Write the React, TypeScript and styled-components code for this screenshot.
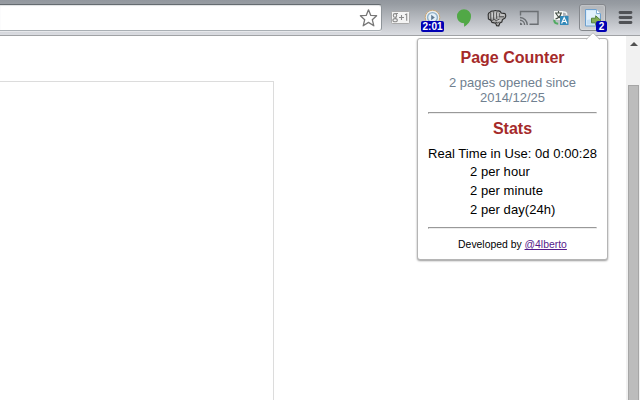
import React from 'react';
import styled, { createGlobalStyle } from 'styled-components';

const GlobalStyle = createGlobalStyle`
  * { box-sizing: border-box; }
  body { margin: 0; background: #fff; overflow: hidden; font-family: "Liberation Sans", Arial, sans-serif; }
`;

const Browser = styled.div`
  position: relative;
  display: flex;
  flex-direction: column;
  width: 640px;
  height: 400px;
  overflow: hidden;
  background: #fff;
`;

const Toolbar = styled.header`
  display: flex;
  flex: none;
  height: 36px;
  background: linear-gradient(#92979e 0, #979ca2 4px, #d9dbe0 34px);
  border-bottom: 1px solid #a0a2a5;
`;

const Omnibox = styled.div`
  display: flex;
  flex: none;
  justify-content: flex-end;
  align-items: center;
  width: 382px;
  height: 27px;
  margin-top: 4px;
  padding-right: 3px;
  background: #fff;
  border: 1px solid #8e9499;
  border-top-color: #656b70;
  border-bottom-color: #a9afb4;
  border-left: 0;
  border-radius: 0 3px 3px 0;
  box-shadow: inset 0 1px 1px #dfe1e3, 0 1px 0 rgba(255, 255, 255, 0.45);
`;

const Actions = styled.div`
  display: grid;
  grid-template-columns: repeat(8, 32px);
  margin-left: 2px;
  height: 35px;
`;

const Action = styled.div<{ $indent?: number }>`
  position: relative;
  display: flex;
  justify-content: center;
  align-items: center;
  padding-left: ${(p) => p.$indent ?? 0}px;
`;

const ActiveFrame = styled.div`
  display: flex;
  align-items: center;
  justify-content: center;
  width: 27px;
  height: 27px;
  margin-left: 1px;
  border: 1px solid #85888d;
  border-radius: 3px;
  background: linear-gradient(#b2b5b9, #d0d2d5);
  box-shadow: inset 0 0 2px rgba(255, 255, 255, 0.7);
`;

const Badge = styled.span<{ $left: number; $width: number }>`
  position: absolute;
  left: ${(p) => p.$left}px;
  top: 21px;
  width: ${(p) => p.$width}px;
  height: 11px;
  border-radius: 2px;
  background: #0000b4;
  color: #fff;
  font-size: 10px;
  font-weight: bold;
  line-height: 12px;
  text-align: center;
`;

const Content = styled.div`
  display: flex;
  flex: 1;
  min-height: 0;
`;

const Page = styled.main`
  flex: 1;
  padding-top: 45px;
`;

const PageBox = styled.section`
  width: 274px;
  height: 330px;
  border: 1px solid #dcdcdc;
  border-left: 0;
`;

const Scrollbar = styled.div`
  display: flex;
  flex-direction: column;
  width: 14px;
  padding: 6px 1px 0 2px;
  background: #f1f1f1;
`;

const ScrollArrow = styled.svg`
  display: block;
  margin-left: 2px;
`;

const ScrollThumb = styled.div`
  flex: 1;
  margin-top: 39px;
  background: #bcbcbc;
  border: 1px solid #a6a6a6;
  border-bottom: 0;
`;

const Popup = styled.aside`
  position: absolute;
  left: 417px;
  top: 38px;
  width: 191px;
  height: 222px;
  padding: 10px;
  background: #fff;
  border: 1px solid #b5b5b5;
  border-radius: 3px;
  box-shadow: 0 1px 2px rgba(0, 0, 0, 0.4);
  color: #000;
  font-size: 13px;
  text-align: center;
`;

const Pointer = styled.svg`
  position: absolute;
  left: 168px;
  top: -7px;
`;

const Heading = styled.h1`
  margin: 0;
  height: 18px;
  color: #a52a2a;
  font-size: 16px;
  font-weight: bold;
  line-height: 18px;
`;

const Summary = styled.p`
  margin: 8px 0 7px;
  color: #708090;
  line-height: 15px;
`;

const Rule = styled.hr`
  height: 2px;
  margin: 0;
  border: 1px solid #ededed;
  border-top-color: #999;
  border-left-color: #999;
`;

const Stats = styled.div`
  padding-top: 6px;
`;

const TimeLine = styled.p`
  margin: 8px 0 0;
  line-height: 15px;
  letter-spacing: 0.045px;
  white-space: nowrap;
`;

const RateList = styled.ul`
  margin: 1px 0 8px;
  padding: 0 0 0 42px;
  list-style: none;
  text-align: left;
  letter-spacing: 0.06px;
`;

const Rate = styled.li`
  height: 19px;
  line-height: 19px;
`;

const Credit = styled.footer`
  margin-top: 9px;
  font-size: 10.4px;
  line-height: 13px;
`;

const CreditLink = styled.a`
  color: #551a8b;
  text-decoration: underline;
`;

const StarIcon = () => (
  <svg width="20" height="20" viewBox="0 0 20 20" fill="#fff" stroke="#777" strokeWidth="1.3" strokeLinejoin="round">
    <path d="M10.5 1.8 L12.8 7.4 L18.6 7.7 L14.3 11.7 L15.8 17.8 L10.5 14.4 L5.2 17.8 L6.7 11.7 L2.4 7.7 L8.2 7.4 Z" />
  </svg>
);

const PlusIcon = () => (
  <svg width="20" height="14" viewBox="0 0 20 14">
    <rect x="1.5" y=".5" width="18" height="12" rx="1" fill="#f4f4f4" stroke="#a9a9a9" />
    <g fill="none" stroke="#8b8b8b" strokeWidth="1.1">
      <ellipse cx="5" cy="4.4" rx="1.7" ry="1.8" />
      <ellipse cx="5.1" cy="9.2" rx="2.2" ry="1.6" />
      <path d="M5.2 2.5h2.8M6.2 6.1l-1 1.4M9 6.5h5M11.5 4v5M15 3.8l1.7-.8v6.8" />
    </g>
  </svg>
);

const ClockIcon = () => (
  <svg width="18" height="18" viewBox="0 0 18 18">
    <circle cx="9.5" cy="8.5" r="7.3" fill="#eceded" stroke="#c8a878" strokeWidth="1" />
    <circle cx="9.5" cy="8.5" r="4.9" fill="#e4f0f8" stroke="#8fb0c8" strokeWidth="1.4" />
    <path d="M8.2 5.8 11.8 8.5 8.2 11.2Z" fill="#5f7890" />
  </svg>
);

const BalloonIcon = () => (
  <svg width="16" height="20" viewBox="0 0 16 20">
    <path d="M8 1.2 A7 7 0 0 1 15 8.2 C15 13.3 11.6 16.6 8.1 18.8 V15.2 C4 15.2 1 12.2 1 8.2 A7 7 0 0 1 8 1.2Z" fill="#51a846" />
  </svg>
);

const FistIcon = () => (
  <svg width="20" height="18" viewBox="0 0 20 18">
    <path d="M1.2 6 Q1 3.7 3.2 3.2 Q4.5 1.5 6.5 2.1 Q8.5 .8 10.2 2.1 Q13 1.2 14.3 4 L18 4.6 Q19.5 6.5 18 9 L15.5 10.5 L14.8 13 L12.8 14 L11.8 16.9 L9.6 16.8 L8.7 14.3 L5 13.4 L4 11.5 L1.4 10 Z" fill="#b0b0b0" stroke="#303030" strokeWidth="1.1" />
    <path d="M3.8 4v6M6.7 3.2v7.2M9.7 3.3v6.6M12.2 4.2v3.1M12 7.8h5M3 10.2l2.2 1.2 2-1 2.2 1.3 3-1.5M8.5 13.2l2 .7 1.8-1.2" fill="none" stroke="#3b3b3b" strokeWidth=".9" />
    <path d="M5.2 4v4.6M8.1 3.5v5M11 4v3M13.4 6h4M10.5 12.2l3-.8" fill="none" stroke="#d2d2d2" strokeWidth="1.2" />
  </svg>
);

const CastIcon = () => (
  <svg width="20" height="16" viewBox="0 0 20 16" fill="none" stroke="#6b6f73" strokeWidth="1.4">
    <path d="M1.5 5.5V1.5h17.5v12.8h-8.5" />
    <path d="M1 7.5 A7.5 7.5 0 0 1 8.3 15M1 10.2 A4.8 4.8 0 0 1 5.6 15" />
    <path d="M1 12.6 A2.4 2.4 0 0 1 3.3 15H1Z" fill="#6b6f73" stroke="none" />
  </svg>
);

const TranslateIcon = () => (
  <svg width="16" height="16" viewBox="0 0 16 16">
    <rect x="1" y="1" width="9" height="9" fill="#f6f7f5" />
    <path d="M2 3h7M5.5 1v2M3 3.5q2 3.8 5 5M8 3.5q-1 4-5.5 5.5" stroke="#455047" fill="none" strokeWidth="1.1" />
    <path d="M1.2 9.8q0 3.8 4 4" stroke="#51aa62" strokeWidth="2" fill="none" />
    <path d="M10 2q3.8-.5 3.7 3" stroke="#edf2f3" strokeWidth="1.6" fill="none" />
    <rect x="7" y="6" width="8.5" height="9" fill="#3389b9" />
    <path d="M8.6 13.5 11.2 7.6 13.9 13.5M9.5 11.5h3.5" fill="none" stroke="#fff" strokeWidth="1.2" />
  </svg>
);

const PageIcon = () => (
  <svg width="18" height="20" viewBox="0 0 18 20">
    <path d="M1.5 1.5h11l4 4v12.5h-15Z" fill="#d5e9f8" stroke="#6c9fce" />
    <path d="M3 3h8.5v4H15v9.5H3Z" fill="#e2f1fc" />
    <path d="M3 12q5-2 12 1v3.5H3Z" fill="#c4def4" />
    <path d="M12.5 1.5v4h4" fill="#fff" stroke="#83afd3" />
    <path d="M7.5 10.2h4.2V7.8l5.3 4.7-5.3 4.7v-2.4H7.5Z" fill="#85ad55" stroke="#53823c" />
  </svg>
);

const MenuIcon = () => (
  <svg width="15" height="15" viewBox="0 0 15 15">
    <path d="M2 2.5h11M2 7.5h11M2 12.5h11" stroke="#505256" strokeWidth="2.8" strokeLinecap="round" />
  </svg>
);

const rates = ['2 per hour', '2 per minute', '2 per day(24h)'];

export default function App() {
  return (
    <Browser>
      <GlobalStyle />
      <Toolbar>
        <Omnibox><StarIcon /></Omnibox>
        <Actions>
          <Action><PlusIcon /></Action>
          <Action><ClockIcon /><Badge $left={5} $width={23}>2:01</Badge></Action>
          <Action><BalloonIcon /></Action>
          <Action $indent={1}><FistIcon /></Action>
          <Action $indent={1}><CastIcon /></Action>
          <Action $indent={1}><TranslateIcon /></Action>
          <Action>
            <ActiveFrame><PageIcon /></ActiveFrame>
            <Badge $left={20} $width={11}>2</Badge>
          </Action>
          <Action $indent={2}><MenuIcon /></Action>
        </Actions>
      </Toolbar>
      <Content>
        <Page><PageBox /></Page>
        <Scrollbar>
          <ScrollArrow width="8" height="4" viewBox="0 0 8 4"><path d="M0 4 4 0 8 4Z" fill="#505050" /></ScrollArrow>
          <ScrollThumb />
        </Scrollbar>
      </Content>
      <Popup>
        <Pointer width="14" height="8" viewBox="0 0 14 8">
          <path d="M0 8 7 1 14 8Z" fill="#fff" />
          <path d="M0 7.5 7 .8 14 7.5" fill="none" stroke="#b5b5b5" strokeWidth=".8" />
        </Pointer>
        <Heading>Page Counter</Heading>
        <Summary>2 pages opened since 2014/12/25</Summary>
        <Rule />
        <Stats>
          <Heading as="h2">Stats</Heading>
          <TimeLine>Real Time in Use: 0d 0:00:28</TimeLine>
          <RateList>{rates.map((rate) => <Rate key={rate}>{rate}</Rate>)}</RateList>
        </Stats>
        <Rule />
        <Credit>Developed by <CreditLink href="#">@4lberto</CreditLink></Credit>
      </Popup>
    </Browser>
  );
}
